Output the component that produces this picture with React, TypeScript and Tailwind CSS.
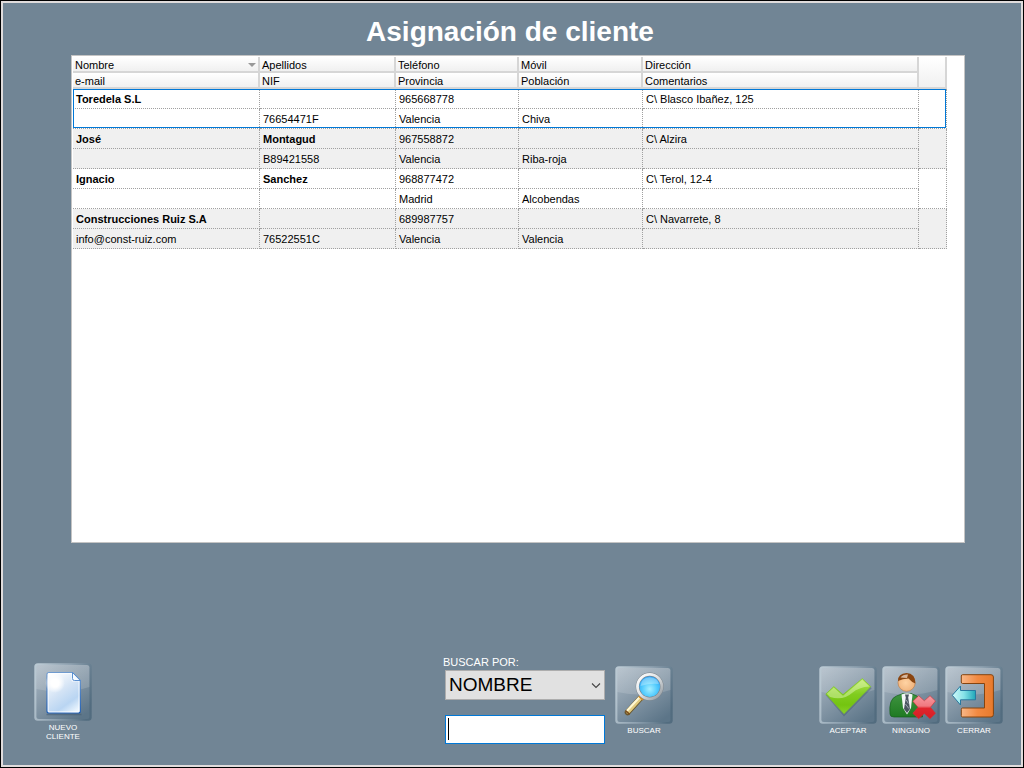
import { useState, type ReactNode } from "react";

type Client = {
  nombre: string;
  apellidos: string;
  telefono: string;
  movil: string;
  direccion: string;
  email: string;
  nif: string;
  provincia: string;
  poblacion: string;
  comentarios: string;
};

const clients: Client[] = [
  { nombre: "Toredela S.L", apellidos: "", telefono: "965668778", movil: "", direccion: "C\\ Blasco Ibañez, 125", email: "", nif: "76654471F", provincia: "Valencia", poblacion: "Chiva", comentarios: "" },
  { nombre: "José", apellidos: "Montagud", telefono: "967558872", movil: "", direccion: "C\\ Alzira", email: "", nif: "B89421558", provincia: "Valencia", poblacion: "Riba-roja", comentarios: "" },
  { nombre: "Ignacio", apellidos: "Sanchez", telefono: "968877472", movil: "", direccion: "C\\ Terol, 12-4", email: "", nif: "", provincia: "Madrid", poblacion: "Alcobendas", comentarios: "" },
  { nombre: "Construcciones Ruiz S.A", apellidos: "", telefono: "689987757", movil: "", direccion: "C\\ Navarrete, 8", email: "info@const-ruiz.com", nif: "76522551C", provincia: "Valencia", poblacion: "Valencia", comentarios: "" },
];

const headCell =
  "h-4 border-r-2 border-b-2 border-[#d6d6d6] bg-linear-to-b from-white to-[#f0f0f0] p-0 pt-[2px] pl-[2px] text-left font-normal leading-3";
const bodyCell = "h-5 border-r border-b border-dotted border-[#a0a0a0] p-0 pt-px pl-[3px] leading-[18px]";

function Head({ children }: { children?: ReactNode }) {
  return <th scope="col" className={headCell}>{children}</th>;
}

function ClientGrid() {
  const [selected, setSelected] = useState(0);
  return (
    <table className="w-[874px] table-fixed border-separate border-spacing-0 text-[11px] whitespace-nowrap text-black">
      <colgroup>
        <col className="w-[187px]" />
        <col className="w-[136px]" />
        <col className="w-[123px]" />
        <col className="w-[124px]" />
        <col className="w-[276px]" />
        <col className="w-[28px]" />
      </colgroup>
      <thead>
        <tr>
          <th scope="col" className={headCell}>
            <span className="flex items-center justify-between pr-[2px]">
              Nombre
              <svg className="h-1 w-2" viewBox="0 0 8 4" aria-hidden="true">
                <path d="M0 0H8L4 4Z" fill="#999" />
              </svg>
            </span>
          </th>
          <Head>Apellidos</Head>
          <Head>Teléfono</Head>
          <Head>Móvil</Head>
          <Head>Dirección</Head>
          <td rowSpan={2} className="border-r-2 border-b-2 border-[#d6d6d6] bg-linear-to-b from-white to-[#f0f0f0] p-0" />
        </tr>
        <tr>
          <Head>e-mail</Head>
          <Head>NIF</Head>
          <Head>Provincia</Head>
          <Head>Población</Head>
          <Head>Comentarios</Head>
        </tr>
      </thead>
      {clients.map((c, i) => (
        <tbody
          key={c.nombre}
          onClick={() => setSelected(i)}
          className={
            (i % 2 ? "bg-[#f0f0f0] " : "bg-white ") +
            (i === selected
              ? "relative after:pointer-events-none after:absolute after:top-0 after:right-px after:bottom-px after:left-0 after:border after:border-[#0078d7]"
              : "")
          }
        >
          <tr>
            <td className={bodyCell + " font-bold"}>{c.nombre}</td>
            <td className={bodyCell + " font-bold"}>{c.apellidos}</td>
            <td className={bodyCell}>{c.telefono}</td>
            <td className={bodyCell}>{c.movil}</td>
            <td className={bodyCell}>{c.direccion}</td>
            <td rowSpan={2} className={bodyCell} />
          </tr>
          <tr>
            <td className={bodyCell}>{c.email}</td>
            <td className={bodyCell}>{c.nif}</td>
            <td className={bodyCell}>{c.provincia}</td>
            <td className={bodyCell}>{c.poblacion}</td>
            <td className={bodyCell}>{c.comentarios}</td>
          </tr>
        </tbody>
      ))}
    </table>
  );
}

function Tile({ id, label, children }: { id: string; label: ReactNode; children: ReactNode }) {
  return (
    <button type="button" className="flex w-[58px] flex-col items-center gap-[2px] text-center text-[8px] leading-[9px] text-white">
      <svg className="size-[58px]" viewBox="0 0 58 58" aria-hidden="true">
        <defs>
          <linearGradient id={id + "-face"} x1="0.1" y1="0" x2="0.8" y2="1">
            <stop offset="0" stopColor="#a9b7c3" />
            <stop offset="0.45" stopColor="#8799a8" />
            <stop offset="1" stopColor="#5c7588" />
          </linearGradient>
          <linearGradient id={id + "-edge"} x1="0" y1="0.35" x2="1" y2="0.65">
            <stop offset="0" stopColor="#b9c8d2" />
            <stop offset="0.5" stopColor="#8fa2b1" />
            <stop offset="1" stopColor="#526c7f" />
          </linearGradient>
          <linearGradient id={id + "-gloss"} x1="0" y1="0" x2="0" y2="1">
            <stop offset="0" stopColor="#fff" stopOpacity="0.16" />
            <stop offset="1" stopColor="#fff" stopOpacity="0.14" />
          </linearGradient>
        </defs>
        <rect x="0.3" y="0.3" width="57.4" height="57.4" rx="3.5" fill={`url(#${id}-edge)`} />
        <rect x="2.4" y="2" width="53" height="54" rx="2.5" fill={`url(#${id}-face)`} />
        <path d="M2.4 4.500Q2.400 2 5 2H53Q55.400 2 55.400 4.500V24Q30 32 2.400 26Z" fill={`url(#${id}-gloss)`} />
        {children}
      </svg>
      <span>{label}</span>
    </button>
  );
}

function DocumentArt() {
  return (
    <>
      <defs>
        <linearGradient id="doc-fill" x1="0.2" y1="0" x2="0.8" y2="1">
          <stop offset="0" stopColor="#fff" />
          <stop offset="0.45" stopColor="#d3e3f5" />
          <stop offset="0.75" stopColor="#b9d5f2" />
          <stop offset="1" stopColor="#ecf6fe" />
        </linearGradient>
        <radialGradient id="doc-glow">
          <stop offset="0.4" stopColor="#fff" />
          <stop offset="1" stopColor="#fff" stopOpacity="0" />
        </radialGradient>
        <linearGradient id="doc-line" x1="0" y1="0" x2="0" y2="1">
          <stop offset="0" stopColor="#6f9bd0" />
          <stop offset="1" stopColor="#1c5cb4" />
        </linearGradient>
      </defs>
      <path d="M12.5 51.5H47.5" stroke="#3d566b" strokeOpacity="0.5" strokeWidth="1.5" />
      <path d="M15 9.5H38.5L46.3 17.5V48Q46.3 50 44.3 50H15Q13 50 13 48V11.5Q13 9.5 15 9.5Z" fill="url(#doc-fill)" stroke="url(#doc-line)" strokeWidth="1.2" />
      <path d="M14.2 10.7H38V18H45V48.8H14.2Z" fill="none" stroke="#fff" strokeOpacity="0.75" />
      <circle cx="21" cy="20" r="10" fill="url(#doc-glow)" />
      <path d="M38.5 9.5V15.5Q38.5 17.5 40.5 17.5H46.3Z" fill="#f7fbff" stroke="#4c86cc" strokeWidth="0.9" />
    </>
  );
}

function SearchArt() {
  return (
    <>
      <defs>
        <radialGradient id="lens" cx="0.5" cy="0.6" r="0.6">
          <stop offset="0" stopColor="#a5efff" />
          <stop offset="0.55" stopColor="#4cc8fd" />
          <stop offset="1" stopColor="#2a92ea" />
        </radialGradient>
        <linearGradient id="rim" x1="0" y1="0" x2="1" y2="1">
          <stop offset="0" stopColor="#fff" />
          <stop offset="0.5" stopColor="#dde0e2" />
          <stop offset="1" stopColor="#8d959b" />
        </linearGradient>
      </defs>
      <path d="M26.5 31L12.5 46.5" stroke="#6a5830" strokeWidth="5.6" strokeLinecap="round" />
      <path d="M25.8 31.6L13 45.6" stroke="#e2cc80" strokeWidth="4.4" strokeLinecap="round" />
      <path d="M24.3 31.5L12 44.7" stroke="#fff8d5" strokeWidth="2" strokeLinecap="round" />
      <path d="M10.5 44.7L14.7 48.3" stroke="#7a4d1c" strokeWidth="1.6" />
      <path d="M24.5 30L28.3 33.5" stroke="#d98a1e" strokeWidth="3" />
      <circle cx="34.7" cy="20.6" r="12.2" fill="url(#lens)" stroke="#7a838a" strokeWidth="3.6" />
      <circle cx="34.7" cy="20.6" r="12.2" fill="none" stroke="url(#rim)" strokeWidth="2.8" />
      <path d="M25.6 20Q26 11.8 34.7 11.2Q43 11.8 43.8 18Q35 17 25.6 20Z" fill="#fff" fillOpacity="0.3" />
    </>
  );
}

function CheckArt() {
  return (
    <>
      <defs>
        <linearGradient id="check" x1="0" y1="0" x2="0" y2="1">
          <stop offset="0" stopColor="#b4e65a" />
          <stop offset="0.45" stopColor="#80cc1e" />
          <stop offset="0.75" stopColor="#74c410" />
          <stop offset="1" stopColor="#8ad22a" />
        </linearGradient>
      </defs>
      <path d="M7.500 28.500L25 49L52 21.500" fill="none" stroke="#3c5060" strokeOpacity="0.35" strokeWidth="2" />
      <path d="M6.800 28L14.800 20.600L24 28.600L43.300 12.600L51.800 20.600L25 47.800Z" fill="url(#check)" stroke="#79c41e" strokeWidth="0.6" strokeLinejoin="round" />
      <path d="M7.800 27.800L14.700 21.600L24 29.800L43.200 13.700L50.500 20.500Q40 21 33 27Q24 35 11 31Z" fill="#f0fccf" fillOpacity="0.42" />
    </>
  );
}

function NobodyArt() {
  return (
    <>
      <defs>
        <linearGradient id="suit" x1="0" y1="0" x2="0" y2="1">
          <stop offset="0" stopColor="#3f9440" />
          <stop offset="1" stopColor="#1f7a22" />
        </linearGradient>
        <radialGradient id="face" cx="0.45" cy="0.5" r="0.6">
          <stop offset="0" stopColor="#ffd3a3" />
          <stop offset="1" stopColor="#eeb079" />
        </radialGradient>
        <linearGradient id="cross" x1="0" y1="0" x2="0" y2="1">
          <stop offset="0" stopColor="#f79aa0" />
          <stop offset="0.45" stopColor="#f0797f" />
          <stop offset="0.55" stopColor="#e0262d" />
          <stop offset="1" stopColor="#d61d24" />
        </linearGradient>
      </defs>
      <path d="M8 48Q6.500 33 14.500 30L21 27.500H29L35 30Q41 33 40.500 51H12Q8 51 8 48Z" fill="url(#suit)" stroke="#14601b" strokeWidth="0.7" />
      <path d="M19.500 28.500L21 42L25 48.500L29 42L30.500 28.500Q25 26 19.500 28.500Z" fill="#f4f6f8" />
      <path d="M23 28.500H27L26.200 31.500L28 43L25 47L22 43L23.800 31.500Z" fill="#4a5560" />
      <path d="M24.300 34L26.300 37.500M23.500 38L26.800 42.500" stroke="#b5bec6" strokeWidth="0.8" />
      <circle cx="24.600" cy="16.700" r="8.600" fill="url(#face)" stroke="#c17a40" strokeWidth="0.6" />
      <path d="M16 15Q16 7.500 24.500 7.100Q33.300 7.500 33.400 17.500Q30 16.500 26.500 12.500Q20.500 12.500 16 15Z" fill="#8a4510" />
      <path d="M18.500 11.500Q21 8.200 26 8.500L25 12Q21 11.800 18.500 11.500Z" fill="#efdccb" fillOpacity="0.75" />
      <path d="M36.700 29.700L42.300 34.800L48 29.700L53.500 35L48.500 41.300L53.500 47.300L48 52.700L42.300 47.500L36.700 52.700L30.800 47.300L36 41.300L30.800 35.300Z" fill="url(#cross)" stroke="#cf2f36" strokeWidth="0.6" strokeLinejoin="round" />
    </>
  );
}

function ExitArt() {
  return (
    <>
      <defs>
        <linearGradient id="frame" x1="0" y1="0" x2="1" y2="0">
          <stop offset="0" stopColor="#f9b888" />
          <stop offset="0.5" stopColor="#f28a42" />
          <stop offset="1" stopColor="#e87a2c" />
        </linearGradient>
        <linearGradient id="arrow" x1="0" y1="0" x2="1" y2="0">
          <stop offset="0" stopColor="#d2fafa" />
          <stop offset="0.5" stopColor="#86e2e8" />
          <stop offset="1" stopColor="#1fa6b8" />
        </linearGradient>
      </defs>
      <path d="M17.500 8.700H46Q48.400 8.700 48.400 11V48.500Q48.400 51 46 51H17.500Q16.300 51 16.300 49.500V43.500Q16.300 42 17.500 42H39.500V17.500H17.500Q16.300 17.500 16.300 16V10Q16.300 8.700 17.500 8.700Z" fill="url(#frame)" stroke="#85440f" strokeWidth="1" />
      <path d="M7.300 29.300L15.500 20V24.500H30.500V33.800H15.500V39Z" fill="url(#arrow)" stroke="#2878a0" strokeWidth="1" strokeLinejoin="round" />
    </>
  );
}

export default function App() {
  return (
    <div className="min-h-screen border border-black bg-black font-['Liberation_Sans',Arial,sans-serif]">
      <main className="flex min-h-[calc(100vh-2px)] flex-col border-2 border-[#e0dcdc] bg-[#718595]">
        <h1 className="pt-[15px] pr-1 pb-[9px] text-center text-[28px] leading-7 font-bold text-white">
          Asignación de cliente
        </h1>

        <section aria-label="Clientes" className="mr-14 ml-[68px] flex-1 overflow-hidden border border-[#c4c4c4] bg-white pt-px pl-px">
          <ClientGrid />
        </section>

        <footer className="flex items-start pt-[113px] pr-[18px] pb-[21px] pl-[31px]">
          <div className="flex-1 pt-[7px]">
            <Tile id="nuevo" label={<>NUEVO<br />CLIENTE</>}>
              <DocumentArt />
            </Tile>
          </div>

          <form className="mr-[146px] flex gap-[10px]" onSubmit={(e) => e.preventDefault()}>
            <div>
              <label htmlFor="campo" className="block pb-[2px] text-[11px] leading-3 text-white">
                BUSCAR POR:
              </label>
              <div className="flex flex-col gap-[15px] pl-[2px]">
                <div className="relative">
                  <select
                    id="campo"
                    defaultValue="NOMBRE"
                    className="block h-[30px] w-40 appearance-none border border-[#adadad] bg-[#e1e1e1] pr-6 pl-[3px] text-[19px] leading-7 text-black"
                  >
                    <option>NOMBRE</option>
                    <option>APELLIDOS</option>
                    <option>NIF</option>
                  </select>
                  <svg className="pointer-events-none absolute top-3 right-1 h-[7px] w-[10px]" viewBox="0 0 10 7" aria-hidden="true">
                    <path d="M1 1.500L5 5.500L9 1.500" fill="none" stroke="#444" strokeWidth="1.100" />
                  </svg>
                </div>
                <div className="relative">
                  <input
                    type="text"
                    aria-label="Texto de búsqueda"
                    className="peer block h-[29px] w-40 border border-[#0078d7] bg-white px-[3px] text-[19px] text-black outline-none"
                  />
                  <span className="pointer-events-none absolute top-[3px] left-[3px] h-[22px] w-px bg-black peer-focus:hidden" />
                </div>
              </div>
            </div>
            <div className="pt-[10px]">
              <Tile id="buscar" label="BUSCAR">
                <SearchArt />
              </Tile>
            </div>
          </form>

          <div className="flex gap-[5px] pt-[10px]">
            <Tile id="aceptar" label="ACEPTAR">
              <CheckArt />
            </Tile>
            <Tile id="ninguno" label="NINGUNO">
              <NobodyArt />
            </Tile>
            <Tile id="cerrar" label="CERRAR">
              <ExitArt />
            </Tile>
          </div>
        </footer>
      </main>
    </div>
  );
}
